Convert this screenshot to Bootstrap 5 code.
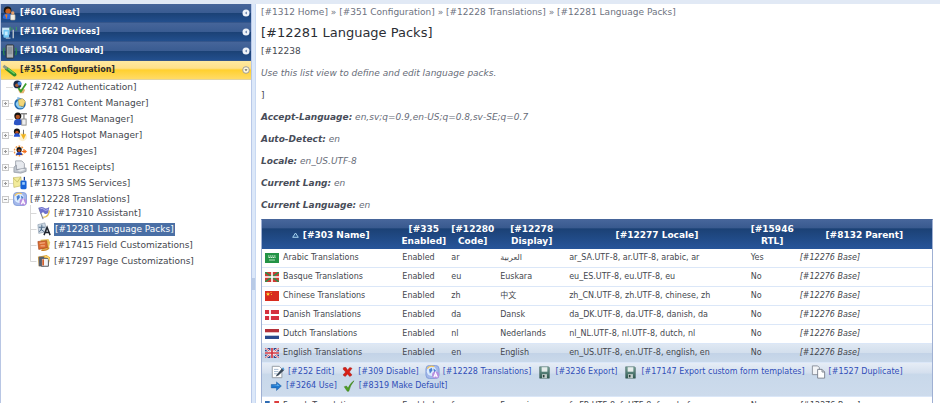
<!DOCTYPE html>
<html lang="en">
<head>
<meta charset="utf-8">
<meta name="viewport" content="width=device-width, initial-scale=1">
<title>Language Packs</title>
<link href="https://cdn.jsdelivr.net/npm/bootstrap@5.3.0/dist/css/bootstrap.min.css" rel="stylesheet">
<style>
body{font-family:"DejaVu Sans",Verdana,"Noto Sans CJK SC",sans-serif;font-size:9px;line-height:12px;color:#44474e;background:#fff}
a{text-decoration:none;color:inherit}
svg{display:block;flex:none}
.page-shell{border-top:4px solid #e1e9f5}
.side-pane{width:252px;flex:none;border-left:1px solid #b8c6e4;border-right:1px solid #b8c8e8}
.split-bar{width:4px;flex:none;background:#dce8f9;border-right:1px solid #c9d9f2;padding-top:68vh}
.split-grip{width:3px;height:12px;background:#b9cbe6}
.section-btn{height:19px;border:0;padding:0 1px 0 1px;color:#fff;font-size:8px;font-weight:700;text-align:left;background:linear-gradient(#46659a 0,#3a5c92 48%,#1b4175 50%,#234f8d 100%);border-bottom:1px solid #35568b}
.section-btn.open-section{color:#2d2d2d;background:linear-gradient(#ffe9a0 0,#ffe08a 40%,#ffd02f 50%,#ffdb66 100%);border-bottom-color:#e2d3a2}
.section-icon{margin-right:3px}
.tree{margin-top:-1px}
.tree a{height:16px;gap:3px}
.twig{width:12px;height:16px;flex:none;border:0;padding:0;background:none}
.sub-tree{margin:-2px 0 0 29px}
.sub-tree .twig{width:7px}
.sub-tree .picked span{background:#4a6fa5;color:#fff;line-height:13px;padding:0 1px}
.main-pane{padding:2px 7px 0 5px;min-width:0}
.trail{color:#6d7280}
.trail-row{margin-bottom:7px}
h1{font-size:13px;line-height:16px;font-weight:400;color:#2b2e34;margin-bottom:4px}
.note{margin-bottom:10px}
.soft{color:#676c78;font-style:italic}
.soft b{color:#484d59}
.packs{font-size:8px;table-layout:fixed;border:1px solid #9fb0d3;border-top-color:#46659a;margin-top:-2px;border-collapse:separate;border-spacing:0;color:#44474e}
.packs th{height:29px;color:#fff;font-size:9px;text-align:center;vertical-align:middle;padding:0 2px;background:linear-gradient(#46659a 0,#38598e 28%,#1b4175 30%,#27559a 100%)}
.packs td{height:19px;padding:0 3px;border-bottom:1px solid #dbe7f8;vertical-align:middle;white-space:nowrap;line-height:12px}
.packs .active-row td{background:linear-gradient(#dfe8f3 0,#d3dfed 48%,#c3d3e7 52%,#cad9ea 100%)}
.packs .tools-cell{height:34px;padding:2px 8px 3px;background:linear-gradient(#e6edf6 0,#d4dfee 30%,#c8d8ea 34%,#cddbec 100%);white-space:normal}
.tools{column-gap:6px;row-gap:0}
.tools a{color:#2f4eb8;gap:3px;height:14px}
.packs-wrap{padding-top:10px}
.c-wide{width:20.5%}.c-slim{width:7.3%}.c-mid{width:10.3%}.c-loc{width:27.1%}.c-par{width:20.2%}
</style>
</head>
<body>
<svg width="0" height="0" class="position-absolute" aria-hidden="true">
<defs>
<linearGradient id="g-save" x2="0" y2="1"><stop stop-color="#7ba49b"/><stop offset="1" stop-color="#2f5951"/></linearGradient>
<symbol id="plus" viewBox="0 0 12 16"><path d="M8 8.500h4" stroke="#dcdcdc"/><rect x="1.500" y="5.500" width="6" height="6" fill="#fafafa" stroke="#c9c9c9"/><path d="M3 8.500h3M4.500 7v3" stroke="#999"/></symbol>
<symbol id="minus" viewBox="0 0 12 16"><path d="M8 8.500h4" stroke="#dcdcdc"/><rect x="1.500" y="5.500" width="6" height="6" fill="#fafafa" stroke="#c9c9c9"/><path d="M3 8.500h3" stroke="#999"/></symbol>
<symbol id="dash" viewBox="0 0 12 16"><path d="M5 8.500h7" stroke="#dcdcdc"/></symbol>
<symbol id="tee" viewBox="0 0 7 16"><path d="M.5 0v16M.5 8.500h6" stroke="#d8d8d8" fill="none"/></symbol>
<symbol id="ell" viewBox="0 0 7 16"><path d="M.5 0v8.500h6" stroke="#d8d8d8" fill="none"/></symbol>
<symbol id="round-left" viewBox="0 0 8 8"><circle cx="4" cy="4" r="3.500" fill="#eef2f8"/><path d="M4.800 2.600L3 4l1.800 1.400z" fill="#5d79a6"/></symbol>
<symbol id="round-down" viewBox="0 0 8 8"><circle cx="4" cy="4" r="3.300" fill="#fff8dc" stroke="#8b8b94" stroke-width=".8"/><path d="M2.500 3.300L4 5.200l1.500-1.900z" fill="#666"/></symbol>
<symbol id="guest" viewBox="0 0 16 16"><circle cx="6" cy="4.500" r="4" fill="#17130f"/><circle cx="6.500" cy="5.500" r="2.900" fill="#c9601f"/><path d="M1 13c0-4 2-5 5-5s5 1 5 5c-3 1.500-7 1.500-10 0z" fill="#2a6be0"/><path d="M3 9l2 5 1-5z" fill="#e87722"/><rect x="9" y="9" width="5" height="6" rx="1" fill="#f1ede3" stroke="#9b968a" stroke-width=".6"/><circle cx="11.500" cy="7.500" r="1.800" fill="#e5a06c"/></symbol>
<symbol id="devices" viewBox="0 0 16 16"><rect x="0" y="3" width="8" height="7" fill="#d9eefb" stroke="#7ea7c8" stroke-width=".6"/><rect x="1.500" y="5" width="6" height="8.500" rx="1" fill="#72c6f4"/><path d="M3 7h3v4H3z" fill="#c8ecff"/><path d="M4 14h5" stroke="#cfd8e3"/><path d="M12 5v9" stroke="#b9c3cc" stroke-width="1.500"/><path d="M9 2q-1 2 0 4M15 2q1 2 0 4M11 3q-.6 1 0 2" stroke="#3fa652" fill="none"/></symbol>
<symbol id="onboard" viewBox="0 0 16 16"><rect x="4.500" y="1" width="8" height="14" rx="1" fill="#aab0b5" stroke="#2d3135"/><path d="M6 3h5v8H6z" fill="#8d959b"/><path d="M2.500 4Q1 8 2.500 12M14.500 4Q16 8 14.500 12" stroke="#2b8a48" fill="none" stroke-width="1.300"/></symbol>
<symbol id="config" viewBox="0 0 16 16"><path d="M5 6l8.500 6.500" stroke="#2d8d2e" stroke-width="3.800" stroke-linecap="round"/><path d="M6 5.800l7.500 5.700" stroke="#74d45c" stroke-width="1.500"/><path d="M1.500 3l4 3" stroke="#8c9a86" stroke-width="3"/></symbol>
<symbol id="auth" viewBox="0 0 16 16"><circle cx="5" cy="5" r="4.500" fill="#172849"/><circle cx="4.500" cy="6" r="2" fill="#ad5f37"/><circle cx="7.500" cy="4" r="2.300" fill="#4b8be0"/><path d="M6 12c3-3 6-2 8-1l-2 4H8z" fill="#e6b36f"/><path d="M6 9l3 4 6-9" stroke="#3c9f2d" stroke-width="2" fill="none"/></symbol>
<symbol id="content" viewBox="0 0 16 16"><circle cx="8" cy="9" r="6.500" fill="#1d67ae"/><path d="M3 9c1-4 6-6 10-4-3 0-5 1-6 4 1 3 4 4 6 3-3 4-9 2-10-3z" fill="#91cff1"/><path d="M6 4l5-1 3 3-2 6-5-1z" fill="#f2d77a" stroke="#b18d2a" stroke-width=".5"/><path d="M5 1l3 1-3 3z" fill="#7cb6e5"/></symbol>
<symbol id="gman" viewBox="0 0 16 16"><circle cx="5.500" cy="4.500" r="4" fill="#17130f"/><circle cx="5.500" cy="5.500" r="2.500" fill="#b25321"/><path d="M1 14c0-4 1-6 5-6s5 2 5 6c-3 1.500-8 1.500-10 0z" fill="#2d55c4"/><path d="M9 2h7M12.500 2v6" stroke="#888" stroke-width="1.500"/><rect x="10" y="8" width="5" height="7" fill="#eee" stroke="#888"/></symbol>
<symbol id="hotspot" viewBox="0 0 16 16"><circle cx="11" cy="10" r="5" fill="#fdf1cf"/><circle cx="4.500" cy="4" r="3.500" fill="#17130f"/><circle cx="4.500" cy="5" r="2" fill="#bd5421"/><path d="M1 10q0-4 3.500-4T8 10z" fill="#2452d0"/><path d="M12 2v9" stroke="#606060"/><path d="M9 7l3 6 3-6z" fill="#f0b41e"/></symbol>
<symbol id="pages" viewBox="0 0 16 16"><circle cx="7" cy="8" r="5.500" fill="#fff" stroke="#f0933d" stroke-dasharray="2 1.500" stroke-width="1.600"/><circle cx="7" cy="6.500" r="3" fill="#17130f"/><circle cx="7" cy="7.500" r="1.600" fill="#bd5421"/><path d="M3.500 12.500q0-3.500 3.500-3.500t3.500 3.500z" fill="#2743a8"/><path d="M10 8h3V6l3 2.500-3 2.500V9h-3z" fill="#f26d1d"/></symbol>
<symbol id="receipts" viewBox="0 0 16 16"><path d="M3 1h7l3 3v7H3z" fill="#e6e9ee" stroke="#9ba1aa"/><path d="M1 8l3-2v5l11-2v4l-6 2-8-1z" fill="#bfc5ce" stroke="#858c98" stroke-width=".7"/><path d="M5 12l6-2 3 1-6 2z" fill="#e8ebef"/></symbol>
<symbol id="sms" viewBox="0 0 16 16"><path d="M0 2l9-1 1 10-9 2z" fill="#f2eb9b" stroke="#b4ab51" stroke-width=".6"/><path d="M0 2l5 5 4-6" stroke="#b4ab51" fill="none" stroke-width=".7"/><rect x="8.500" y="5" width="7" height="10" rx="1.500" fill="#1763d8"/><rect x="10.500" y="7" width="3" height="3" fill="#9fd0ff"/><path d="M13 1v4" stroke="#183c8e" stroke-width="1.500"/></symbol>
<symbol id="trans" viewBox="0 0 16 16"><rect x=".5" y=".5" width="15" height="15" rx="4" fill="#a3b8ea" stroke="#7f9ad8"/><circle cx="7" cy="7" r="5.500" fill="#dcebfd"/><path d="M4 5l3-2 1 3-3 4zM9 4l3 2-2 3z" fill="#4c80ce"/><path d="M2 4q3-4 8-2" stroke="#f3c65e" fill="none" stroke-width="1.500"/><circle cx="11.500" cy="11.500" r="4" fill="#b78ee0"/><path d="M9.500 14l2-5 2 5M10.300 12.400h2.500" stroke="#fff" fill="none" stroke-width="1.200"/></symbol>
<symbol id="assist" viewBox="0 0 16 16"><path d="M2 2l5 13" stroke="#7b7f91" stroke-width="1.300"/><path d="M2 2q4-2 6 0t6-1l-1 7q-4 2-5 0T4 9z" fill="#6d70cc"/><path d="M4 3q3-1 4 1t5 0" stroke="#b8bbf2" fill="none"/><path d="M7 13q7-1 7-8" stroke="#e0bd52" fill="none" stroke-width="1.500"/></symbol>
<symbol id="lang" viewBox="0 0 16 16"><path d="M1 3l8-2 2 10-9 2z" fill="#cfdae6" stroke="#8595a8" stroke-width=".7"/><path d="M2 6h7M5.500 3v3q0 4-3 5M4 8l4 3" stroke="#45627f" fill="none"/><path d="M8 15l3.500-9L15 15M9.300 12h4.500" stroke="#20252e" stroke-width="1.700" fill="none"/></symbol>
<symbol id="field" viewBox="0 0 16 16"><path d="M4 2l9-1 2 4-2 8-7 1z" fill="#e9c45c"/><path d="M1 4l10-1 1 8-10 2z" fill="#d96b30" stroke="#9e411a" stroke-width=".7"/><path d="M3 6l6-.5M4 9h5" stroke="#ffc8a1"/><path d="M5 14q6 1 9-3" stroke="#ca8429" fill="none" stroke-width="1.500"/></symbol>
<symbol id="pagec" viewBox="0 0 16 16"><path d="M1 3l10-2 4 3-2 10H2z" fill="#e2a73b"/><path d="M2 3h6v11H2z" fill="#5a6170"/><path d="M5 5h8v9H5z" fill="#f3f5f8" stroke="#454b58"/><path d="M7 6v7" stroke="#d3602e" stroke-width="2"/><path d="M9 3q5 0 5 4" stroke="#ffdc72" fill="none" stroke-width="1.500"/></symbol>
<symbol id="edit" viewBox="0 0 16 16"><path d="M2 1.500h8l3 3v10H2z" fill="#fff" stroke="#8c939c"/><path d="M4 5h5M4 7.500h5M4 10h4" stroke="#9db4cc"/><path d="M7 11l6-7 2.500 2-6.500 6-3 1z" fill="#3a4857"/><path d="M13 4l1.500-1.500L16 5l-1 1z" fill="#4b94d5"/></symbol>
<symbol id="cross" viewBox="0 0 16 16"><path d="M3 2l3 0 2 3.500L11 2l3 1-3.500 5 3.500 4-3 2-3-3.500L5 14l-3-2 3.500-4L2 4z" fill="#d81f16" stroke="#9e140e" stroke-width=".6"/></symbol>
<symbol id="save" viewBox="0 0 16 16"><path d="M2 1h11l1 1v13H2z" fill="url(#g-save)" stroke="#36574f" stroke-width=".6"/><path d="M4.500 1.500h7V7h-7z" fill="#e6edeb"/><path d="M5 10h6v5H5z" fill="#c3cdcb"/><path d="M6 11h2v3H6z" fill="#2b403c"/></symbol>
<symbol id="dup" viewBox="0 0 16 16"><path d="M1 1h6l2 2v8H1z" fill="#f2f4f7" stroke="#838a95"/><path d="M7 5h5l3 3v7H7z" fill="#fff" stroke="#757c88"/><path d="M12 5v3h3" fill="none" stroke="#757c88"/></symbol>
<symbol id="arrow" viewBox="0 0 16 16"><path d="M1 6h7V2.500L14.500 8 8 14v-3.500H1z" fill="#1f78cf" stroke="#15549c" stroke-width=".6"/><path d="M2 7h7V5l3 3z" fill="#6cb9f3"/></symbol>
<symbol id="check" viewBox="0 0 16 16"><path d="M1 9l3-1 2 3q3-7 8-10-5 6-7 14H5z" fill="#4e9f24" stroke="#357413" stroke-width=".6"/></symbol>
<symbol id="sa" viewBox="0 0 14 10"><path fill="#239346" d="M0 0h14v10H0z"/><path d="M3 3h8M3.500 4.500h7" stroke="#d5efdb" stroke-dasharray="1.500 .5"/><path d="M4 7h6" stroke="#d5efdb" stroke-width=".8"/></symbol>
<symbol id="eu" viewBox="0 0 14 10"><path fill="#d23a35" d="M0 0h14v10H0z"/><path d="M0 0l14 10M14 0L0 10" stroke="#2f8f49" stroke-width="1.600"/><path d="M7 0v10M0 5h14" stroke="#fff" stroke-width="1.600"/></symbol>
<symbol id="cn" viewBox="0 0 14 10"><path fill="#d82b1e" d="M0 0h14v10H0z"/><path d="M3 1l.6 1.400h1.400l-1.100 1 .4 1.400L3 4l-1.300.8.4-1.400-1.100-1h1.400z" fill="#ffdf3a"/><circle cx="6" cy="1.500" r=".5" fill="#ffdf3a"/><circle cx="6.500" cy="3.500" r=".5" fill="#ffdf3a"/></symbol>
<symbol id="dk" viewBox="0 0 14 10"><path fill="#d5303f" d="M0 0h14v10H0z"/><path d="M5 0v10M0 5h14" stroke="#fff" stroke-width="1.800"/></symbol>
<symbol id="nl" viewBox="0 0 14 10"><path fill="#fff" d="M0 0h14v10H0z"/><path fill="#b4303a" d="M0 0h14v3.300H0z"/><path fill="#294a8e" d="M0 6.700h14V10H0z"/></symbol>
<symbol id="gb" viewBox="0 0 14 10"><path fill="#2d468c" d="M0 0h14v10H0z"/><path d="M0 0l14 10M14 0L0 10" stroke="#fff" stroke-width="2"/><path d="M0 0l14 10M14 0L0 10" stroke="#cf3440" stroke-width=".8"/><path d="M7 0v10M0 5h14" stroke="#fff" stroke-width="3"/><path d="M7 0v10M0 5h14" stroke="#cf3440" stroke-width="1.700"/></symbol>
<symbol id="fr" viewBox="0 0 14 10"><path fill="#fff" d="M0 0h14v10H0z"/><path fill="#2f6cb3" d="M0 0h4.700v10H0z"/><path fill="#dc3d3d" d="M9.300 0H14v10H9.300z"/></symbol>
</defs>
</svg>

<div class="page-shell d-flex vh-100 overflow-hidden">
<nav class="side-pane d-flex flex-column" aria-label="Administration">
  <button type="button" class="section-btn d-flex align-items-center w-100"><svg class="section-icon" width="15" height="15"><use href="#guest"/></svg><span class="flex-grow-1">[#601 Guest]</span><svg width="8" height="8"><use href="#round-left"/></svg></button>
  <button type="button" class="section-btn d-flex align-items-center w-100"><svg class="section-icon" width="15" height="15"><use href="#devices"/></svg><span class="flex-grow-1">[#11662 Devices]</span><svg width="8" height="8"><use href="#round-left"/></svg></button>
  <button type="button" class="section-btn d-flex align-items-center w-100"><svg class="section-icon" width="15" height="15"><use href="#onboard"/></svg><span class="flex-grow-1">[#10541 Onboard]</span><svg width="8" height="8"><use href="#round-left"/></svg></button>
  <button type="button" class="section-btn open-section d-flex align-items-center w-100" aria-expanded="true"><svg class="section-icon" width="15" height="15"><use href="#config"/></svg><span class="flex-grow-1">[#351 Configuration]</span><svg width="8" height="8"><use href="#round-down"/></svg></button>
  <ul class="tree list-unstyled mb-0">
    <li class="d-flex"><svg class="twig" width="12" height="16"><use href="#dash"/></svg><a href="#" class="d-flex align-items-center"><svg width="14" height="14"><use href="#auth"/></svg>[#7242 Authentication]</a></li>
    <li class="d-flex"><button type="button" class="twig" aria-label="Expand"><svg width="12" height="16"><use href="#plus"/></svg></button><a href="#" class="d-flex align-items-center"><svg width="14" height="14"><use href="#content"/></svg>[#3781 Content Manager]</a></li>
    <li class="d-flex"><svg class="twig" width="12" height="16"><use href="#dash"/></svg><a href="#" class="d-flex align-items-center"><svg width="14" height="14"><use href="#gman"/></svg>[#778 Guest Manager]</a></li>
    <li class="d-flex"><button type="button" class="twig" aria-label="Expand"><svg width="12" height="16"><use href="#plus"/></svg></button><a href="#" class="d-flex align-items-center"><svg width="14" height="14"><use href="#hotspot"/></svg>[#405 Hotspot Manager]</a></li>
    <li class="d-flex"><button type="button" class="twig" aria-label="Expand"><svg width="12" height="16"><use href="#plus"/></svg></button><a href="#" class="d-flex align-items-center"><svg width="14" height="14"><use href="#pages"/></svg>[#7204 Pages]</a></li>
    <li class="d-flex"><button type="button" class="twig" aria-label="Expand"><svg width="12" height="16"><use href="#plus"/></svg></button><a href="#" class="d-flex align-items-center"><svg width="14" height="14"><use href="#receipts"/></svg>[#16151 Receipts]</a></li>
    <li class="d-flex"><button type="button" class="twig" aria-label="Expand"><svg width="12" height="16"><use href="#plus"/></svg></button><a href="#" class="d-flex align-items-center"><svg width="14" height="14"><use href="#sms"/></svg>[#1373 SMS Services]</a></li>
    <li>
      <div class="d-flex"><button type="button" class="twig" aria-label="Collapse"><svg width="12" height="16"><use href="#minus"/></svg></button><a href="#" class="d-flex align-items-center"><svg width="14" height="14"><use href="#trans"/></svg>[#12228 Translations]</a></div>
      <ul class="sub-tree list-unstyled">
        <li class="d-flex"><svg class="twig" width="7" height="16"><use href="#tee"/></svg><a href="#" class="d-flex align-items-center"><svg width="14" height="14"><use href="#assist"/></svg><span>[#17310 Assistant]</span></a></li>
        <li class="d-flex"><svg class="twig" width="7" height="16"><use href="#tee"/></svg><a href="#" class="picked d-flex align-items-center" aria-current="page"><svg width="14" height="14"><use href="#lang"/></svg><span>[#12281 Language Packs]</span></a></li>
        <li class="d-flex"><svg class="twig" width="7" height="16"><use href="#tee"/></svg><a href="#" class="d-flex align-items-center"><svg width="14" height="14"><use href="#field"/></svg><span>[#17415 Field Customizations]</span></a></li>
        <li class="d-flex"><svg class="twig" width="7" height="16"><use href="#ell"/></svg><a href="#" class="d-flex align-items-center"><svg width="14" height="14"><use href="#pagec"/></svg><span>[#17297 Page Customizations]</span></a></li>
      </ul>
    </li>
  </ul>
</nav>
<div class="split-bar"><div class="split-grip"></div></div>
<main class="main-pane flex-grow-1">
  <nav class="trail trail-row" aria-label="Breadcrumb"><a href="#">[#1312 Home]</a> » <a href="#">[#351 Configuration]</a> » <a href="#">[#12228 Translations]</a> » <a href="#">[#12281 Language Packs]</a></nav>
  <h1>[#12281 Language Packs]</h1>
  <p class="note">[#12238</p>
  <p class="note soft">Use this list view to define and edit language packs.</p>
  <p class="note">]</p>
  <p class="note soft"><b>Accept-Language:</b> en,sv;q=0.9,en-US;q=0.8,sv-SE;q=0.7</p>
  <p class="note soft"><b>Auto-Detect:</b> en</p>
  <p class="note soft"><b>Locale:</b> en_US.UTF-8</p>
  <p class="note soft"><b>Current Lang:</b> en</p>
  <p class="note soft"><b>Current Language:</b> en</p>
  <table class="packs w-100">
    <thead><tr>
      <th class="c-wide" scope="col"><span class="d-flex justify-content-center align-items-center gap-1"><svg width="7" height="6" viewBox="0 0 7 6"><path d="M.7 5.300L3.500 1l2.800 4.300z" fill="#27558f" stroke="#a5d2ee"/></svg>[#303 Name]</span></th>
      <th class="c-slim" scope="col">[#335 Enabled]</th><th class="c-slim" scope="col">[#12280 Code]</th><th class="c-mid" scope="col">[#12278 Display]</th><th class="c-loc" scope="col">[#12277 Locale]</th><th class="c-slim" scope="col">[#15946 RTL]</th><th class="c-par" scope="col">[#8132 Parent]</th>
    </tr></thead>
    <tbody>
      <tr><td><span class="d-flex align-items-center gap-1"><svg width="14" height="10"><use href="#sa"/></svg>Arabic Translations</span></td><td>Enabled</td><td>ar</td><td lang="ar">العربية</td><td>ar_SA.UTF-8, ar.UTF-8, arabic, ar</td><td>Yes</td><td><i>[#12276 Base]</i></td></tr>
      <tr><td><span class="d-flex align-items-center gap-1"><svg width="14" height="10"><use href="#eu"/></svg>Basque Translations</span></td><td>Enabled</td><td>eu</td><td>Euskara</td><td>eu_ES.UTF-8, eu.UTF-8, eu</td><td>No</td><td><i>[#12276 Base]</i></td></tr>
      <tr><td><span class="d-flex align-items-center gap-1"><svg width="14" height="10"><use href="#cn"/></svg>Chinese Translations</span></td><td>Enabled</td><td>zh</td><td lang="zh">中文</td><td>zh_CN.UTF-8, zh.UTF-8, chinese, zh</td><td>No</td><td><i>[#12276 Base]</i></td></tr>
      <tr><td><span class="d-flex align-items-center gap-1"><svg width="14" height="10"><use href="#dk"/></svg>Danish Translations</span></td><td>Enabled</td><td>da</td><td>Dansk</td><td>da_DK.UTF-8, da.UTF-8, danish, da</td><td>No</td><td><i>[#12276 Base]</i></td></tr>
      <tr><td><span class="d-flex align-items-center gap-1"><svg width="14" height="10"><use href="#nl"/></svg>Dutch Translations</span></td><td>Enabled</td><td>nl</td><td>Nederlands</td><td>nl_NL.UTF-8, nl.UTF-8, dutch, nl</td><td>No</td><td><i>[#12276 Base]</i></td></tr>
      <tr class="active-row"><td><span class="d-flex align-items-center gap-1"><svg width="14" height="10"><use href="#gb"/></svg>English Translations</span></td><td>Enabled</td><td>en</td><td>English</td><td>en_US.UTF-8, en.UTF-8, english, en</td><td>No</td><td><i>[#12276 Base]</i></td></tr>
      <tr><td colspan="7" class="tools-cell">
        <div class="tools d-flex flex-wrap">
          <a href="#" class="d-flex align-items-center"><svg width="15" height="14"><use href="#edit"/></svg>[#252 Edit]</a>
          <a href="#" class="d-flex align-items-center"><svg width="15" height="12"><use href="#cross"/></svg>[#309 Disable]</a>
          <a href="#" class="d-flex align-items-center"><svg width="15" height="14"><use href="#trans"/></svg>[#12228 Translations]</a>
          <a href="#" class="d-flex align-items-center"><svg width="15" height="13"><use href="#save"/></svg>[#3236 Export]</a>
          <a href="#" class="d-flex align-items-center"><svg width="15" height="13"><use href="#save"/></svg>[#17147 Export custom form templates]</a>
          <a href="#" class="d-flex align-items-center"><svg width="15" height="14"><use href="#dup"/></svg>[#1527 Duplicate]</a>
        </div>
        <div class="tools d-flex flex-wrap">
          <a href="#" class="d-flex align-items-center"><svg width="13" height="12"><use href="#arrow"/></svg>[#3264 Use]</a>
          <a href="#" class="d-flex align-items-center"><svg width="13" height="12"><use href="#check"/></svg>[#8319 Make Default]</a>
        </div>
      </td></tr>
      <tr><td><span class="d-flex align-items-center gap-1"><svg width="14" height="10"><use href="#fr"/></svg>French Translations</span></td><td>Enabled</td><td>fr</td><td>Français</td><td>fr_FR.UTF-8, fr.UTF-8, french, fr</td><td>No</td><td><i>[#12276 Base]</i></td></tr>
    </tbody>
  </table>
</main>
</div>
<script src="https://cdn.jsdelivr.net/npm/bootstrap@5.3.0/dist/js/bootstrap.bundle.min.js"></script>
</body>
</html>
